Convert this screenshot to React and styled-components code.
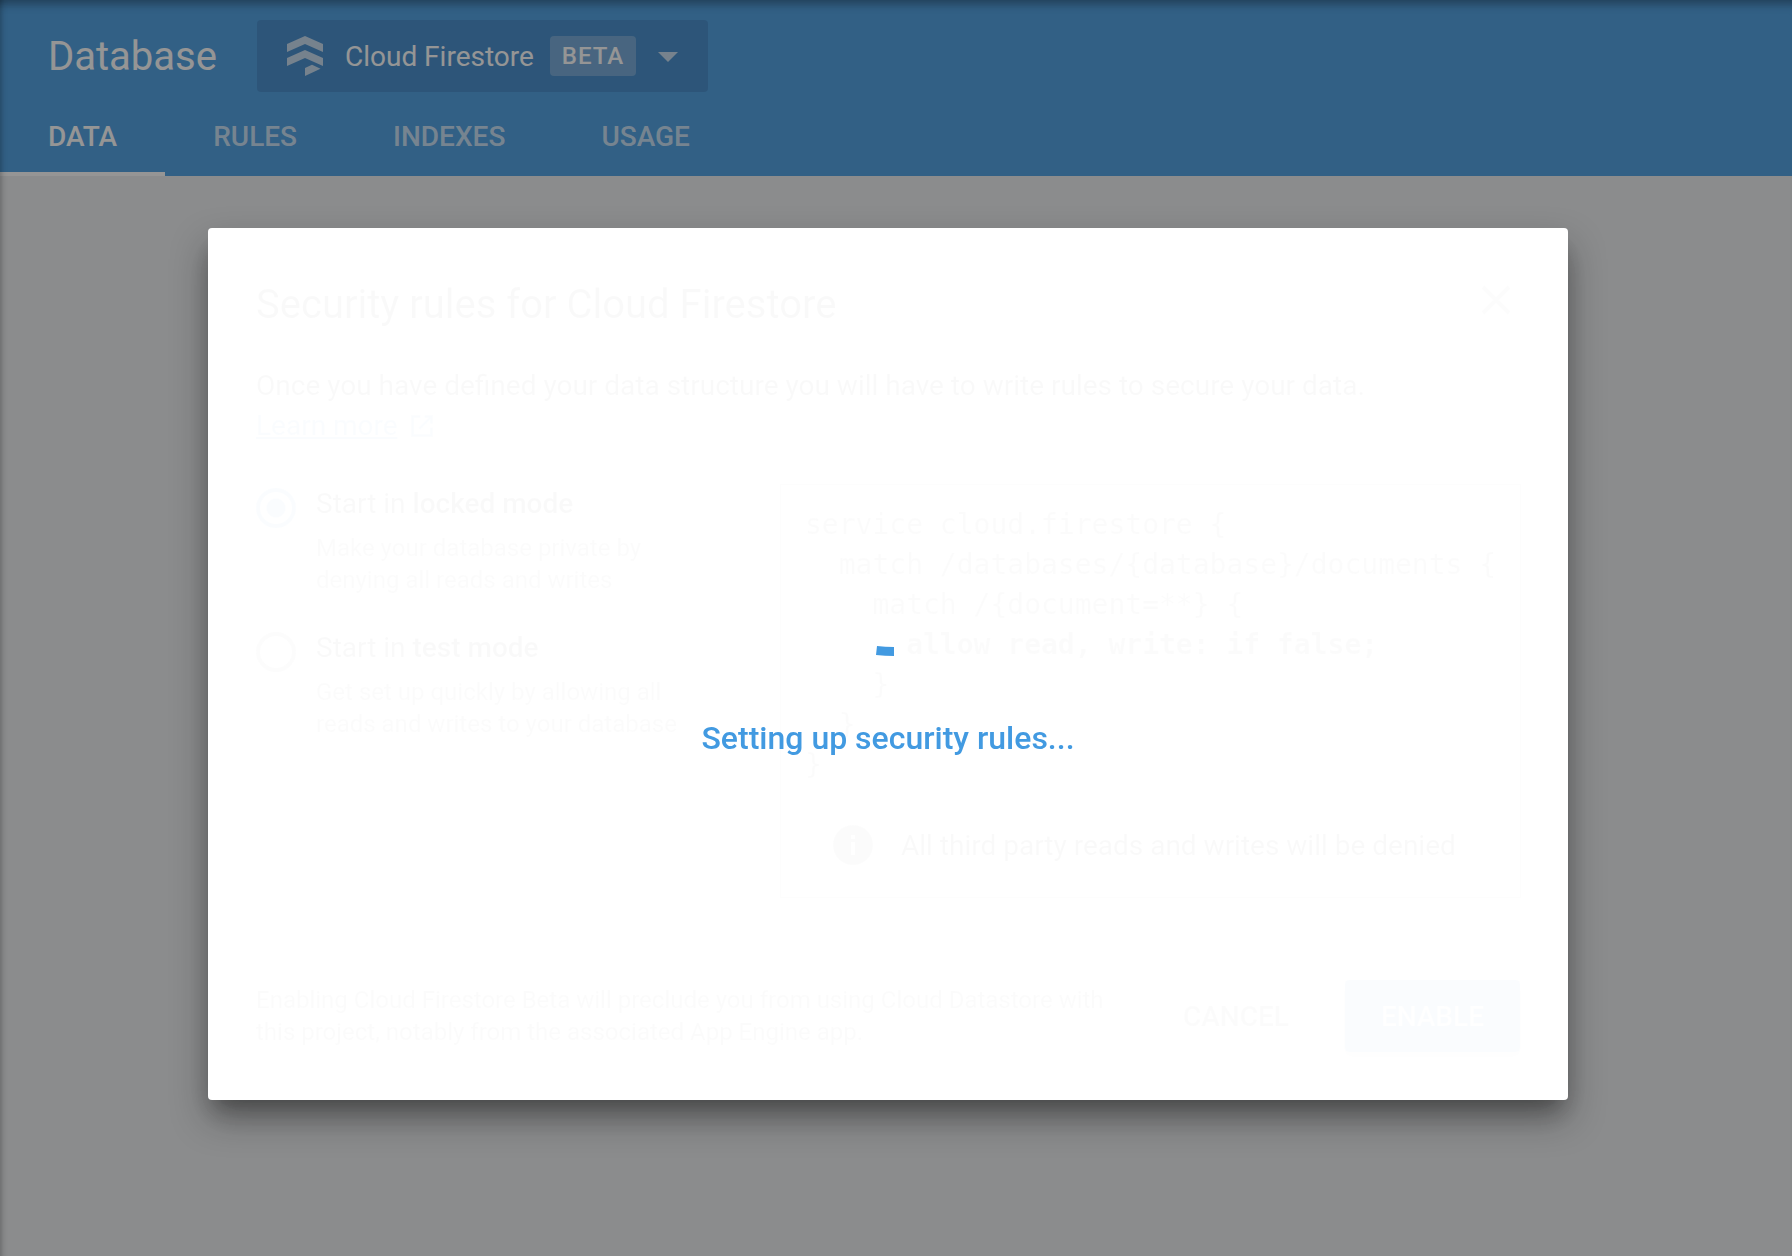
import React from "react";
import styled, { createGlobalStyle } from "styled-components";

const GlobalStyle = createGlobalStyle`
  *, *::before, *::after { box-sizing: border-box; }
  body { margin: 0; background: #eceef0; font-family: Roboto, "Liberation Sans", sans-serif; }
  button { font: inherit; border: 0; background: none; padding: 0; }
  h1, h2, p, pre { margin: 0; }
`;

const Page = styled.div`
  min-height: 100vh;
`;

const Header = styled.header`
  background: #429ae1;
  color: #fff;
`;

const TitleBar = styled.div`
  display: flex;
  align-items: center;
  gap: 40px;
  height: 92px;
  padding: 20px 48px 0;
`;

const PageTitle = styled.h1`
  padding-top: 2px;
  font-size: 40px;
  line-height: 72px;
  font-weight: 400;
`;

const ProductButton = styled.button`
  display: flex;
  align-items: center;
  height: 72px;
  padding: 0 28px;
  border-radius: 4px;
  background: #3885ca;
  color: #fff;
  font-size: 28px;
`;

const ProductName = styled.span`
  margin: 0 16px 0 20px;
`;

const Beta = styled.span`
  height: 40px;
  padding: 0 12px;
  margin-right: 20px;
  border-radius: 4px;
  background: rgba(255, 255, 255, 0.26);
  font-size: 24px;
  line-height: 40px;
  font-weight: 500;
  letter-spacing: 1px;
`;

const Tabs = styled.nav`
  display: flex;
  height: 84px;
`;

const Tab = styled.a`
  padding: 20px 48px 0;
  border-bottom: 4px solid ${(p) => (p.$active ? "#fff" : "transparent")};
  color: ${(p) => (p.$active ? "#fff" : "rgba(255, 255, 255, 0.7)")};
  font-size: 28px;
  line-height: 50px;
  font-weight: 500;
  text-decoration: none;
`;

const Scrim = styled.div`
  position: fixed;
  inset: 0;
  display: flex;
  justify-content: center;
  align-items: flex-start;
  padding: 228px 16px 40px 0;
  background: rgba(33, 33, 33, 0.48);
`;

const WindowEdge = styled.div`
  position: fixed;
  inset: 0;
  pointer-events: none;
  box-shadow:
    inset 0 12px 10px -8px rgba(0, 0, 0, 0.35),
    inset 10px 0 6px -9px rgba(0, 0, 0, 0.3);
`;

const Dialog = styled.section`
  position: relative;
  width: 1360px;
  max-width: 100%;
  padding: 48px;
  border-radius: 4px;
  background: #fff;
  color: #000;
  box-shadow: 0 14px 18px -8px rgba(0, 0, 0, 0.2), 0 18px 36px 0 rgba(0, 0, 0, 0.4);
`;

const Form = styled.form`
  opacity: 0.02;
`;

const DialogHeader = styled.div`
  display: flex;
  justify-content: space-between;
  align-items: flex-start;
`;

const DialogTitle = styled.h2`
  font-size: 40px;
  line-height: 58px;
  font-weight: 400;
`;

const CloseButton = styled.button`
  width: 48px;
  height: 48px;
`;

const Intro = styled.p`
  margin-top: 32px;
  font-size: 28px;
  line-height: 40px;
`;

const LearnMore = styled.a`
  display: inline-flex;
  align-items: center;
  gap: 12px;
  color: #429ae1;
`;

const Columns = styled.div`
  display: grid;
  grid-template-columns: 484px 1fr;
  gap: 40px;
  margin-top: 38px;
`;

const Options = styled.div`
  display: flex;
  flex-direction: column;
  gap: 32px;
`;

const Option = styled.label`
  display: flex;
  gap: 20px;
`;

const Radio = styled.input`
  flex: none;
  appearance: none;
  width: 40px;
  height: 40px;
  margin: 4px 0 0;
  border: 4px solid #888;
  border-radius: 50%;

  &:checked {
    border-color: #429ae1;
    background: radial-gradient(circle, #429ae1 9px, transparent 10px);
  }
`;

const OptionText = styled.span`
  font-size: 28px;
  line-height: 40px;

  b { font-weight: 500; }
`;

const Hint = styled.span`
  display: block;
  width: 380px;
  margin-top: 8px;
  color: #777;
  font-size: 24px;
  line-height: 32px;
`;

const Preview = styled.div`
  border: 1px solid #ccc;
`;

const Code = styled.pre`
  height: 308px;
  padding: 20px 24px;
  color: #777;
  font-family: "DejaVu Sans Mono", "Liberation Mono", monospace;
  font-size: 28px;
  line-height: 40px;

  b { color: #777; }
`;

const Notice = styled.div`
  display: flex;
  align-items: center;
  gap: 28px;
  height: 104px;
  padding: 0 52px;
  font-size: 28px;
`;

const Footer = styled.div`
  display: flex;
  align-items: center;
  margin-top: 82px;
`;

const Disclaimer = styled.p`
  flex: 1;
  max-width: 864px;
  color: #777;
  font-size: 24px;
  line-height: 32px;
`;

const Action = styled.button`
  height: 72px;
  padding: 0 36px;
  border-radius: 4px;
  background: ${(p) => (p.$primary ? "#429ae1" : "transparent")};
  color: ${(p) => (p.$primary ? "#fff" : "#666")};
  box-shadow: ${(p) => (p.$primary ? "0 4px 8px rgba(0, 0, 0, 0.4)" : "none")};
  font-size: 28px;
  font-weight: 500;
`;

const Actions = styled.div`
  display: flex;
  gap: 20px;
  margin-left: auto;
`;

const Progress = styled.div`
  position: absolute;
  inset: 0;
  display: flex;
  flex-direction: column;
  align-items: center;
  justify-content: center;
  gap: 4px;
  padding-top: 76px;
  color: #429ae1;
  font-size: 32px;
  line-height: 40px;
  font-weight: 500;
`;

const CODE_START = `service cloud.firestore {
  match /databases/{database}/documents {
    match /{document=**} {
`;
const CODE_END = `
    }
  }
}`;

const TABS = ["DATA", "RULES", "INDEXES", "USAGE"];

const FirestoreLogo = () => (
  <svg width="40" height="40" viewBox="0 0 40 40" fill="rgba(255,255,255,.7)" aria-hidden="true">
    <path d="M2 8 20 0l18 8v8L20 8 2 16z" />
    <path d="M2 22 20 14l18 8v8L20 22 2 30z" />
    <path d="M20 32l7-3.200 8.500 4L20 40z" />
  </svg>
);

const Caret = () => (
  <svg width="24" height="12" viewBox="0 0 24 12" aria-hidden="true">
    <path d="M2 2h20L12 12z" fill="rgba(255,255,255,.7)" />
  </svg>
);

export default function App() {
  return (
    <Page>
      <GlobalStyle />
      <Header>
        <TitleBar>
          <PageTitle>Database</PageTitle>
          <ProductButton type="button">
            <FirestoreLogo />
            <ProductName>Cloud Firestore</ProductName>
            <Beta>BETA</Beta>
            <Caret />
          </ProductButton>
        </TitleBar>
        <Tabs>
          {TABS.map((name, i) => (
            <Tab key={name} href="#" $active={i === 0}>{name}</Tab>
          ))}
        </Tabs>
      </Header>
      <Scrim>
        <Dialog role="dialog" aria-labelledby="dialog-title">
          <Form>
            <DialogHeader>
              <DialogTitle id="dialog-title">Security rules for Cloud Firestore</DialogTitle>
              <CloseButton type="button" aria-label="Close">
                <svg width="48" height="48" viewBox="0 0 48 48" stroke="#888" strokeWidth="4">
                  <path d="M11 11 37 37M37 11 11 37" />
                </svg>
              </CloseButton>
            </DialogHeader>
            <Intro>
              Once you have defined your data structure you will have to write rules to secure your data.
              <br />
              <LearnMore href="#">
                Learn more
                <svg width="24" height="24" viewBox="0 0 28 28" fill="none" stroke="#429ae1" strokeWidth="3" aria-hidden="true">
                  <path d="M12 3H3v22h22v-9M17 3h8v8M25 3 11 17" />
                </svg>
              </LearnMore>
            </Intro>
            <Columns>
              <Options>
                <Option>
                  <Radio type="radio" name="mode" defaultChecked />
                  <OptionText>
                    Start in <b>locked mode</b>
                    <Hint>Make your database private by denying all reads and writes</Hint>
                  </OptionText>
                </Option>
                <Option>
                  <Radio type="radio" name="mode" />
                  <OptionText>
                    Start in <b>test mode</b>
                    <Hint>Get set up quickly by allowing all reads and writes to your database</Hint>
                  </OptionText>
                </Option>
              </Options>
              <Preview>
                <Code>
                  {CODE_START}
                  <b>{"      allow read, write: if false;"}</b>
                  {CODE_END}
                </Code>
                <Notice>
                  <svg width="40" height="40" viewBox="0 0 40 40" aria-hidden="true">
                    <circle cx="20" cy="20" r="20" fill="#777" />
                    <path d="M20 10v4M20 17v13" stroke="#fff" strokeWidth="4" />
                  </svg>
                  <span>All third party reads and writes will be denied</span>
                </Notice>
              </Preview>
            </Columns>
            <Footer>
              <Disclaimer>
                Enabling Cloud Firestore Beta will preclude you from using Cloud Datastore with this
                project, notably from the associated App Engine app.
              </Disclaimer>
              <Actions>
                <Action type="button">CANCEL</Action>
                <Action type="button" $primary>ENABLE</Action>
              </Actions>
            </Footer>
          </Form>
          <Progress role="status">
            <svg width="96" height="68" viewBox="0 0 96 68" fill="currentColor" aria-hidden="true">
              <path d="M37 0Q45 1 54 1v9Q45 10 36 9z" />
            </svg>
            <span>Setting up security rules...</span>
          </Progress>
        </Dialog>
      </Scrim>
      <WindowEdge />
    </Page>
  );
}
